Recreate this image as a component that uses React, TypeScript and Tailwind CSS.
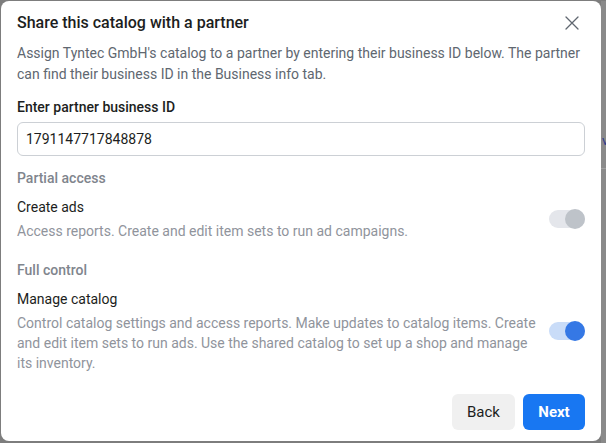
import React from 'react';

const Toggle: React.FC<{ on?: boolean }> = ({ on }) => (
  <div className="relative flex h-[20px] w-[36px] shrink-0 items-center">
    <div className={`h-[18px] w-[36px] rounded-full ${on ? 'bg-[#c9dcf8]' : 'bg-[#e4e6eb]'}`} />
    <div
      className={`absolute right-0 top-0 h-[20px] w-[20px] rounded-full ${on ? 'bg-[#3578e5]' : 'bg-[#bec3c9]'}`}
    />
  </div>
);

const AccessOption: React.FC<{ title: string; desc: string; on?: boolean }> = ({ title, desc, on }) => (
  <div className="flex items-center gap-2">
    <div className="flex-1">
      <div className="text-[14px] leading-[20px] text-[#1c1e21]">{title}</div>
      <p className="mt-[4px] text-[14px] leading-[20px] text-[#90949c]">{desc}</p>
    </div>
    <Toggle on={on} />
  </div>
);

export default function App() {
  return (
    <div
      className="flex h-[443px] w-[606px] bg-[#7d7d7d] pl-[1px] pt-[1px]"
      style={{ fontFamily: 'Roboto, "Liberation Sans", sans-serif' }}
    >
      <div className="flex h-[440px] w-[600px] shrink-0 flex-col rounded-lg bg-white px-4 pt-[12px]">
        {/* Header */}
        <div className="flex items-center justify-between">
          <h2 className="text-[16px] font-medium leading-[20px] text-[#1c1e21]">
            Share this catalog with a partner
          </h2>
          <svg width="16" height="16" viewBox="0 0 16 16" className="mr-[5px] text-[#606770]">
            <path d="M2 2 L14 14 M14 2 L2 14" stroke="currentColor" strokeWidth="1.3" strokeLinecap="round" />
          </svg>
        </div>

        <p className="mt-[10px] text-[14px] leading-[21px] text-[#606770]">
          Assign Tyntec GmbH's catalog to a partner by entering their business ID below. The partner can find
          their business ID in the Business info tab.
        </p>

        <label className="mt-[12px] block text-[14px] font-medium leading-[20px] text-[#1c1e21]">
          Enter partner business ID
        </label>
        <div className="mt-[5px] flex h-[34px] items-center rounded-md border border-[#ccd0d5] px-[8px] text-[14px] text-[#1c1e21]">
          1791147717848878
        </div>

        {/* Partial access */}
        <div className="mt-[12px] text-[14px] font-medium leading-[20px] text-[#7f858d]">Partial access</div>
        <div className="mt-[9px]">
          <AccessOption title="Create ads" desc="Access reports. Create and edit item sets to run ad campaigns." />
        </div>

        {/* Full control */}
        <div className="mt-[19px] text-[14px] font-medium leading-[20px] text-[#7f858d]">Full control</div>
        <div className="mt-[9px]">
          <AccessOption
            title="Manage catalog"
            desc="Control catalog settings and access reports. Make updates to catalog items. Create and edit item sets to run ads. Use the shared catalog to set up a shop and manage its inventory."
            on
          />
        </div>

        {/* Footer */}
        <div className="mt-[21px] flex justify-end gap-2">
          <button className="h-[36px] w-[63px] rounded-md bg-[#f0f0f0] text-[15px] text-[#1c1e21]">Back</button>
          <button className="h-[36px] w-[62px] rounded-md bg-[#1877f2] text-[15px] font-bold text-white">Next</button>
        </div>
      </div>

      {/* Page behind the dialog */}
      <div className="flex flex-1 flex-col overflow-hidden bg-[#8a8a8a]">
        <div className="h-[132px]" />
        <div className="pl-[1px] text-[13px] leading-[16px] text-[#2d3a8c]">v</div>
        <div className="h-[20px] border-b border-[#a0a0a0]" />
      </div>
    </div>
  );
}
